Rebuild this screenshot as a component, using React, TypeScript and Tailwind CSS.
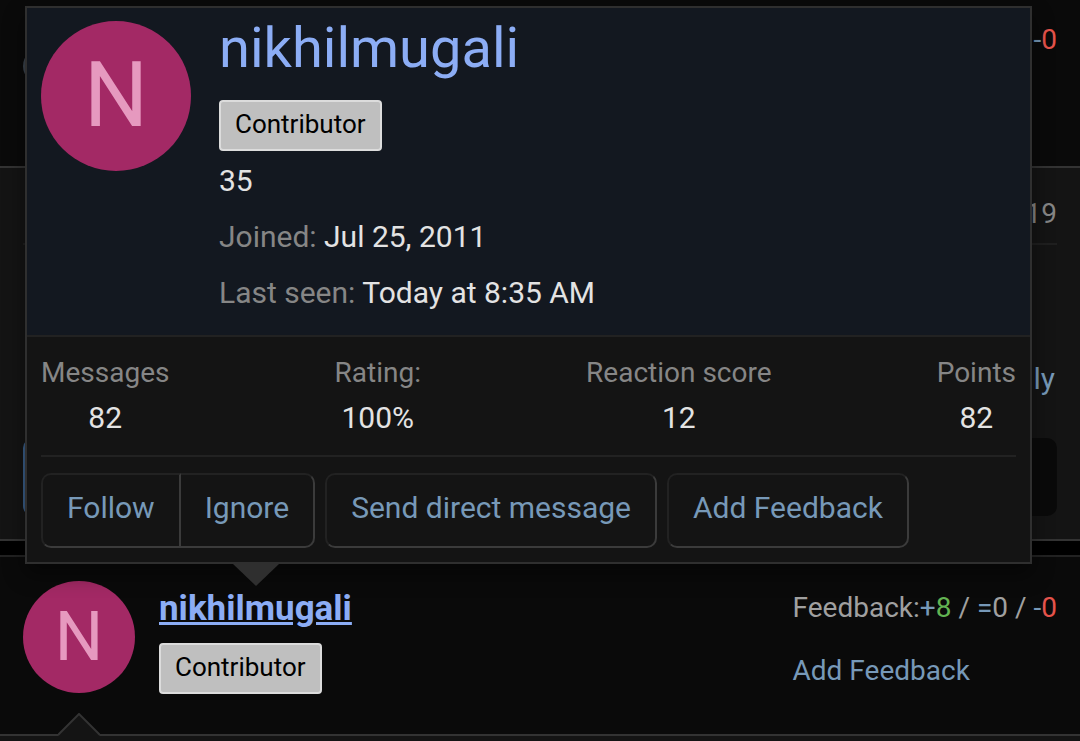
import clsx from 'clsx';

const stats = [
  { label: 'Messages', value: '82' },
  { label: 'Rating:', value: '100%' },
  { label: 'Reaction score', value: '12' },
  { label: 'Points', value: '82' },
];

function Avatar({ large }: { large?: boolean }) {
  return (
    <a
      href="#profile"
      className={clsx(
        'flex shrink-0 items-center justify-center rounded-full bg-[#a32965] text-[#e699bf]',
        large
          ? 'size-[150px] text-[90px] leading-[90px]'
          : 'size-28 text-[68px] leading-[68px]',
      )}
    >
      N
    </a>
  );
}

function UserBanner() {
  return (
    <span className="self-start rounded border-2 border-[#dcdcdc] bg-[#bfbfbf] px-[14px] pt-1 pb-[7px] text-[26px] leading-9 text-black">
      Contributor
    </span>
  );
}

function ActionButton({
  children,
  className = 'rounded-[10px]',
}: {
  children: string;
  className?: string;
}) {
  return (
    <button
      type="button"
      className={clsx(
        'border-2 border-t-[#222222] border-r-[#3b3b3b] border-b-[#3b3b3b] border-l-[#222222] px-6 pt-3 pb-[17px] text-[30px] leading-[42px] text-[#7799b8]',
        className,
      )}
    >
      {children}
    </button>
  );
}

function PreviousPost() {
  return (
    <article className="border-b-2 border-[#333333] bg-[#141414]">
      <header className="flex h-[168px] items-start justify-between border-b-2 border-[#333333] bg-[#0a0a0a] px-[23px] pt-5">
        <div className="mt-7 size-9 rounded-full bg-[#3c4650]" />
        <a href="#negative" className="text-[28px] leading-10 text-[#7799b8]">
          -<span className="text-[#e5534b]">0</span>
        </a>
      </header>
      <div className="px-[23px] pt-[26px] pb-[23px]">
        <div className="border-b-2 border-[#1f1f1f] pb-[9px] text-right text-[28px] leading-10 text-[#868686]">
          19
        </div>
        <div className="pt-[113px] pr-0.5 pb-[38px] text-right text-[30px] leading-[42px] text-[#7799b8]">
          ly
        </div>
        <blockquote className="h-[78px] rounded-[10px] border-l-4 border-[#3a5f8a] bg-[#0a0a0a]" />
      </div>
    </article>
  );
}

function Post() {
  return (
    <article className="border-t-2 border-[#222222] bg-[#0a0a0a]">
      <header className="relative flex h-[179px] items-start justify-between border-b-2 border-[#333333] px-[23px] pt-6">
        <div className="flex gap-6">
          <Avatar />
          <div className="flex flex-col gap-[11px] pt-1">
            <a
              href="#profile"
              className="text-[35px] leading-[47px] font-bold text-[#8cadf5] underline"
            >
              nikhilmugali
            </a>
            <UserBanner />
          </div>
        </div>
        <div className="flex flex-col gap-[23px] pt-[7px] text-[28px] leading-10 text-[#a0a0a0]">
          <div>
            Feedback:
            <a href="#positive" className="text-[#7799b8]">
              +<span className="text-[#62b352]">8</span>
            </a>
            {' / '}
            <a href="#neutral" className="text-[#7799b8]">
              =<span className="text-[#a0a0a0]">0</span>
            </a>
            {' / '}
            <a href="#negative" className="text-[#7799b8]">
              -<span className="text-[#e5534b]">0</span>
            </a>
          </div>
          <a href="#feedback" className="text-[#7799b8]">
            Add Feedback
          </a>
        </div>
        <svg
          className="absolute -bottom-0.5 left-[58px]"
          width="42"
          height="23"
          viewBox="0 0 42 23"
        >
          <path d="M0 23L21 1L42 23Z" fill="#141414" />
          <path d="M0 22L21 1L42 22" fill="none" stroke="#333333" strokeWidth="2" />
        </svg>
      </header>
      <div className="h-10 bg-[#141414]" />
    </article>
  );
}

function MemberCard() {
  return (
    <section className="absolute top-1.5 right-12 left-[25px] border-2 border-[#2f2f2f] bg-[#141414] shadow-[0_10px_20px_rgba(0,0,0,0.45)]">
      <div className="flex gap-7 border-b-2 border-[#222222] bg-[#131820] px-[14px] pt-[13px] pb-[21px]">
        <Avatar large />
        <div className="flex flex-col">
          <a
            href="#profile"
            className="mb-[25px] text-[56px] leading-[54px] text-[#8cadf5]"
          >
            nikhilmugali
          </a>
          <UserBanner />
          <div className="mt-[9px] flex flex-col gap-[14px] text-[30px] leading-[42px] text-[#e3e3e3]">
            <div>35</div>
            <div>
              <span className="text-[#868686]">Joined:</span> Jul 25, 2011
            </div>
            <div>
              <span className="text-[#868686]">Last seen:</span> Today at 8:35 AM
            </div>
          </div>
        </div>
      </div>
      <div className="px-[14px] pt-4 pb-[14px]">
        <dl className="flex justify-between border-b-2 border-[#222222] pb-4 text-center">
          {stats.map((stat) => (
            <div key={stat.label} className="flex flex-col gap-1">
              <dt className="text-[28px] leading-10 text-[#868686]">{stat.label}</dt>
              <dd className="text-[30px] leading-[42px] text-[#e3e3e3]">
                {stat.value}
              </dd>
            </div>
          ))}
        </dl>
        <div className="flex gap-[10px] pt-4">
          <div className="flex">
            <ActionButton className="rounded-l-[10px]">Follow</ActionButton>
            <ActionButton className="rounded-r-[10px] border-l-0">
              Ignore
            </ActionButton>
          </div>
          <ActionButton>Send direct message</ActionButton>
          <ActionButton>Add Feedback</ActionButton>
        </div>
      </div>
      <svg
        className="absolute top-full left-[206px] mt-0.5"
        width="46"
        height="22"
        viewBox="0 0 46 22"
      >
        <path d="M0 0H46L23 22Z" fill="#2f2f2f" />
      </svg>
    </section>
  );
}

export default function App() {
  return (
    <main className="relative flex h-screen flex-col gap-[14px] overflow-hidden bg-black font-['Roboto',sans-serif]">
      <PreviousPost />
      <Post />
      <MemberCard />
    </main>
  );
}
